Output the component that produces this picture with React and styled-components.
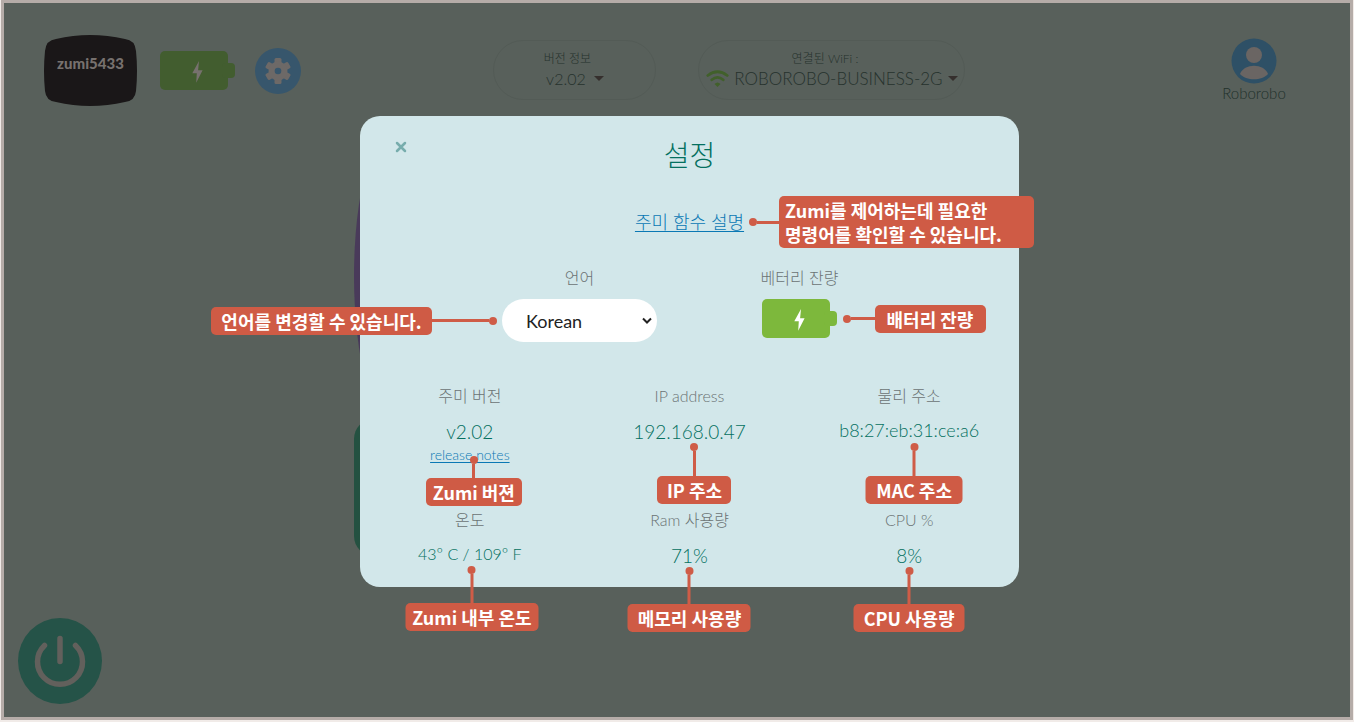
import React from "react";
import styled, { createGlobalStyle } from "styled-components";

const GlobalStyle = createGlobalStyle`
  *, *::before, *::after { box-sizing: border-box; }
  body {
    margin: 0;
    background: #f1ebe8;
    font-family: Lato, "Noto Sans CJK KR", "Noto Sans", sans-serif;
    font-weight: 300;
  }
  button, select { font: inherit; color: inherit; }
  dl, dd, dt, h1, p { margin: 0; font-weight: inherit; }
`;

const Frame = styled.div`
  padding: 0 1px 2px;
  min-height: 100vh;
  display: flex;
`;

const Page = styled.div`
  position: relative;
  flex: 1;
  min-width: 0;
  display: flex;
  flex-direction: column;
  border: 3px solid #b5aca8;
  background: #58605b;
`;

const Header = styled.header`
  display: grid;
  grid-template-columns: auto 3fr auto 4fr auto;
  align-items: center;
  padding: 32px 64px 0 40px;
  color: #26322d;
`;

const StatusGroup = styled.div`
  grid-column: 1;
  display: flex;
  align-items: center;
`;

const RobotName = styled.div`
  position: relative;
  width: 93px;
  height: 71px;
  margin-right: 23px;
  padding-top: 18px;
  text-align: center;
  font-size: 15px;
  line-height: 20px;
  font-weight: 900;
  color: #77716e;

  svg { position: absolute; inset: 0; }
  span { position: relative; }
`;

const SettingsButton = styled.button`
  display: grid;
  place-items: center;
  width: 46px;
  height: 46px;
  margin-left: 19px;
  padding: 0;
  border: 0;
  border-radius: 50%;
  background: #37566c;
`;

const PillGroup = styled.div`
  grid-column: 3;
  display: flex;
  gap: 42px;
  padding-bottom: 2px;
`;

const Pill = styled.button`
  width: ${(p) => p.$width};
  height: 60px;
  padding: 0;
  border: 1px solid #535b56;
  border-radius: 30px;
  background: transparent;
`;

const PillLabel = styled.span`
  display: block;
  padding-right: ${(p) => p.$inset || 0};
  font-size: 12px;
  line-height: 18px;
`;

const PillValue = styled.span`
  display: flex;
  align-items: center;
  justify-content: center;
  gap: ${(p) => p.$gap};
  font-size: ${(p) => p.$size};
  line-height: 22px;
  white-space: nowrap;
`;

const Caret = styled.i`
  border: 5px solid transparent;
  border-top-color: #352f2d;
  border-bottom: 0;
`;

const Account = styled.a`
  grid-column: 5;
  display: flex;
  flex-direction: column;
  align-items: center;
  width: 64px;
  padding-bottom: 2px;
  font-size: 15px;
  line-height: 18px;
  color: #22312b;
  text-decoration: none;
`;

const Tiles = styled.main`
  width: 646px;
  margin: 22px auto 0;
`;

const ProjectTile = styled.div`
  height: 296px;
  border-radius: 40px / 148px;
  background: #493a5a;
`;

const CodeTile = styled.div`
  height: 137px;
  margin-top: -5px;
  border-radius: 20px;
  background: #245141;
`;

const PowerButton = styled.button`
  position: absolute;
  left: 14px;
  bottom: 13px;
  width: 84px;
  height: 86px;
  padding: 0;
  border: 0;
  border-radius: 50%;
  background: #255348;
`;

const Overlay = styled.div`
  position: absolute;
  inset: 0;
  display: flex;
  justify-content: center;
  align-items: flex-start;
  padding: 113px 0 0 25px;
`;

const Dialog = styled.section`
  position: relative;
  width: 659px;
  padding: 19px 0;
  border-radius: 20px;
  background: #d2e7ea;
  display: flex;
  flex-direction: column;
  align-items: center;
  color: #04705f;
`;

const CloseButton = styled.button`
  position: absolute;
  left: 34px;
  top: 24px;
  width: 14px;
  height: 14px;
  padding: 0;
  border: 0;
  background: none;
  svg { display: block; }
`;

const Title = styled.h1`
  font-size: 28px;
  line-height: 40px;
`;

const Anchor = styled.div`
  position: relative;
  display: inline-flex;
`;

const GuideRow = styled.div`
  margin-top: 35px;
  font-size: 18px;
  line-height: 24px;
`;

const TextLink = styled.a`
  color: #0a78b4;
  text-decoration: underline;
  text-underline-offset: 2px;
`;

const Controls = styled.div`
  display: grid;
  grid-template-columns: 220px 220px;
  margin-top: 34px;
`;

const Control = styled.div`
  display: flex;
  flex-direction: column;
  align-items: center;
  gap: 11px;
`;

const Label = styled.label`
  font-size: 16px;
  line-height: 20px;
  color: #6b7374;
`;

const Select = styled.select`
  width: 155px;
  height: 43px;
  padding: 0 24px;
  border: 0;
  border-radius: 22px;
  appearance: none;
  background: #fff;
  color: #222;
  font-size: 18px;
  font-weight: 400;
`;

const SelectArrow = styled.svg`
  position: absolute;
  right: 4px;
  top: 17px;
  pointer-events: none;
`;

const Stats = styled.dl`
  display: grid;
  grid-template-columns: repeat(3, 1fr);
  width: 100%;
  margin-top: 44px;
`;

const Stat = styled.div`
  position: relative;
  min-height: ${(p) => p.$height};
  text-align: center;
`;

const StatValue = styled.dd`
  margin-top: 14px;
  font-size: ${(p) => p.$size || "19px"};
  line-height: ${(p) => (p.$size ? "20px" : "24px")};
`;

const NotesLink = styled(TextLink)`
  display: block;
  font-size: 14px;
  line-height: 22px;
`;

const SideCallout = styled.div`
  position: absolute;
  top: 50%;
  z-index: 2;
  display: flex;
  align-items: center;
  transform: translateY(-50%);
  flex-direction: ${(p) => (p.$side === "left" ? "row-reverse" : "row")};
  ${(p) => (p.$side === "left" ? "right" : "left")}: calc(100% + 5px);
`;

const BelowCallout = styled.div`
  position: absolute;
  z-index: 2;
  top: ${(p) => p.$top};
  left: calc(50% + ${(p) => p.$shift || "0px"});
  display: flex;
  flex-direction: column;
  align-items: center;
  transform: translateX(-50%);
`;

const Dot = styled.i`
  width: 8px;
  height: 8px;
  border-radius: 50%;
  background: #cf5c47;
`;

const Stem = styled.i`
  width: ${(p) => p.$width || "3px"};
  height: ${(p) => p.$height || "3px"};
  background: #cf5c47;
`;

const Note = styled.p`
  width: ${(p) => p.$width};
  padding: 2px 6px;
  border-radius: 5px;
  background: #cf5b45;
  color: #fff;
  font-family: "Noto Sans CJK KR", sans-serif;
  font-size: 18px;
  line-height: 24px;
  font-weight: 700;
  text-align: ${(p) => p.$align || "center"};
  white-space: nowrap;

  span { display: block; }
`;

function Battery({ fill, bolt }) {
  return (
    <svg width="76" height="39" viewBox="0 0 76 39" aria-hidden="true">
      <rect width="68" height="39" rx="5" fill={fill} />
      <rect x="62" y="12" width="13" height="15" rx="4" fill={fill} />
      <path d="M39 10 32.300 22.300h4.500l-.6 9.500L42.600 19.300h-4.500z" fill={bolt} />
    </svg>
  );
}

function SideNote({ side, stem, width, align, children }) {
  return (
    <SideCallout $side={side}>
      <Dot />
      <Stem $width={stem} />
      <Note $width={width} $align={align}>{children}</Note>
    </SideCallout>
  );
}

function BelowNote({ top, shift, stem, width, children }) {
  return (
    <BelowCallout $top={top} $shift={shift}>
      <Dot />
      <Stem $height={stem} />
      <Note $width={width}>{children}</Note>
    </BelowCallout>
  );
}

const STATS = [
  { label: "주미 버전", value: "v2.02", link: "release notes", note: { text: "Zumi 버젼", top: "70px", shift: "4px", stem: "14px", width: "96px" } },
  { label: "IP address", value: "192.168.0.47", note: { text: "IP 주소", top: "57px", shift: "5px", stem: "25px", width: "74px" } },
  { label: "물리 주소", value: "b8:27:eb:31:ce:a6", size: "18px", note: { text: "MAC 주소", top: "57px", shift: "5px", stem: "25px", width: "97px" } },
  { label: "온도", value: "43º C / 109º F", size: "16px", note: { text: "Zumi 내부 온도", top: "56px", shift: "2px", stem: "29px", width: "133px" } },
  { label: "Ram 사용량", value: "71%", note: { text: "메모리 사용량", top: "57px", stem: "29px", width: "123px" } },
  { label: "CPU %", value: "8%", note: { text: "CPU 사용량", top: "57px", stem: "29px", width: "111px" } },
];

export default function App() {
  return (
    <Frame>
      <GlobalStyle />
      <Page>
        <Header>
          <StatusGroup>
            <RobotName>
              <svg width="93" height="71" viewBox="0 0 93 71" aria-hidden="true">
                <path d="M12 4Q46 -4 81 4Q91 5 92 16Q94 36 92 56Q91 66 81 67Q46 75 12 67Q2 66 1 56Q-1 36 1 16Q2 5 12 4Z" fill="#1a1718" />
              </svg>
              <span>zumi5433</span>
            </RobotName>
            <Battery fill="#425d2f" bolt="#77716e" />
            <SettingsButton aria-label="설정">
              <svg width="26" height="26" viewBox="0 0 26 26" aria-hidden="true">
                <g fill="#6d6967">
                  <rect x="9.500" y="0" width="7" height="26" rx="1.500" />
                  <rect x="9.500" y="0" width="7" height="26" rx="1.500" transform="rotate(60 13 13)" />
                  <rect x="9.500" y="0" width="7" height="26" rx="1.500" transform="rotate(120 13 13)" />
                  <circle cx="13" cy="13" r="9.500" />
                </g>
                <circle cx="13" cy="13" r="3.300" fill="#37566c" />
              </svg>
            </SettingsButton>
          </StatusGroup>
          <PillGroup>
            <Pill $width="163px">
              <PillLabel $inset="15px">버전 정보</PillLabel>
              <PillValue $size="16px" $gap="8px">
                v2.02 <Caret />
              </PillValue>
            </Pill>
            <Pill $width="267px">
              <PillLabel $inset="14px">연결된 WiFi :</PillLabel>
              <PillValue $size="17px" $gap="5px">
                <svg width="23" height="17" viewBox="0 0 23 17" fill="none" stroke="#41602b" strokeWidth="2.800" strokeLinecap="round" aria-hidden="true">
                  <path d="M1.800 5.500Q11.500 -2 21.200 5.500M5.800 9.800Q11.500 5 17.200 9.800" />
                  <path d="M11.500 17 8.500 14Q11.500 11 14.500 14Z" fill="#41602b" stroke="none" />
                </svg>
                ROBOROBO-BUSINESS-2G <Caret />
              </PillValue>
            </Pill>
          </PillGroup>
          <Account href="#account">
            <svg width="46" height="46" viewBox="0 0 46 46" aria-hidden="true">
              <circle cx="23" cy="23" r="22.500" fill="#2e5066" />
              <circle cx="23" cy="17" r="8" fill="#6a6563" />
              <path d="M9 36C13 25 33 25 37 36C31 43 15 43 9 36Z" fill="#6a6563" />
            </svg>
            Roborobo
          </Account>
        </Header>

        <Tiles>
          <ProjectTile />
          <CodeTile />
        </Tiles>

        <Overlay>
          <Dialog role="dialog" aria-labelledby="settings-title">
            <CloseButton aria-label="닫기">
              <svg width="14" height="14" viewBox="0 0 14 14" stroke="#77adad" strokeWidth="2.500" strokeLinecap="round">
                <path d="M3 3 11 11M11 3 3 11" />
              </svg>
            </CloseButton>
            <Title id="settings-title">설정</Title>

            <GuideRow>
              <Anchor>
                <TextLink href="#functions">주미 함수 설명</TextLink>
                <SideNote side="right" stem="22px" width="255px" align="left">
                  <span>Zumi를 제어하는데 필요한</span>
                  <span>명령어를 확인할 수 있습니다.</span>
                </SideNote>
              </Anchor>
            </GuideRow>

            <Controls>
              <Control>
                <Label htmlFor="language">언어</Label>
                <Anchor>
                  <Select id="language" defaultValue="ko">
                    <option value="ko">Korean</option>
                    <option value="en">English</option>
                  </Select>
                  <SelectArrow width="12" height="10" viewBox="0 0 12 10" fill="none" stroke="#222" strokeWidth="2">
                    <path d="M2 2.500 6 6.500 10 2.500" />
                  </SelectArrow>
                  <SideNote side="left" stem="57px" width="221px">언어를 변경할 수 있습니다.</SideNote>
                </Anchor>
              </Control>
              <Control>
                <Label as="span">베터리 잔량</Label>
                <Anchor>
                  <Battery fill="#7db83c" bolt="#fff" />
                  <SideNote side="right" stem="24px" width="111px">배터리 잔량</SideNote>
                </Anchor>
              </Control>
            </Controls>

            <Stats>
              {STATS.map((s, i) => (
                <Stat key={s.label} $height={i < 3 ? "124px" : "57px"}>
                  <Label as="dt">{s.label}</Label>
                  <StatValue $size={s.size}>
                    {s.value}
                    {s.link && <NotesLink href="#notes">{s.link}</NotesLink>}
                  </StatValue>
                  <BelowNote {...s.note}>{s.note.text}</BelowNote>
                </Stat>
              ))}
            </Stats>
          </Dialog>
        </Overlay>

        <PowerButton aria-label="전원">
          <svg width="84" height="86" viewBox="0 0 84 86" fill="none" stroke="#62605c" strokeWidth="5.500" strokeLinecap="round" aria-hidden="true">
            <path d="M42 20.500V43.500M26.500 27.500A22.500 22.500 0 1 0 57.500 27.500" />
          </svg>
        </PowerButton>
      </Page>
    </Frame>
  );
}
